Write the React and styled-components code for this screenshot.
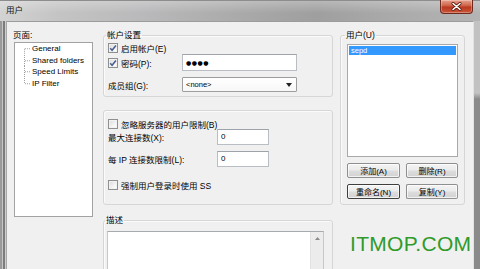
import React from "react";
import styled, { createGlobalStyle } from "styled-components";

const FONT = `"Liberation Sans", "Noto Sans CJK SC", sans-serif`;

const Global = createGlobalStyle`
  html, body { margin: 0; padding: 0; background: #f0f0f0; }
  body { font-family: ${FONT}; }
  * { box-sizing: border-box; }
`;

const Window = styled.div`
  position: relative;
  width: 480px;
  height: 269px;
  overflow: hidden;
  display: flex;
  flex-direction: column;
  font-family: ${FONT};
  font-size: 8.5px;
  color: #000;
  background: #f0f0f0;
`;

const TitleBar = styled.div`
  height: 21px;
  flex: none;
  display: flex;
  justify-content: space-between;
  align-items: flex-start;
  background:
    linear-gradient(to bottom, rgba(255,255,255,0.25), rgba(255,255,255,0) 60%),
    linear-gradient(to right, #d3d3d3 0%, #c4c4c4 12%, #b9b9bb 30%, #a6a6a6 55%, #9f9f9f 66%, #a9a9a9 80%, #b4b4b4 100%);
  border-top: 1px solid #8d8d8d;
`;

const Title = styled.div`
  padding: 3px 0 0 6px;
  line-height: 13px;
  font-size: 8.5px;
  color: #111;
`;

const CloseButton = styled.div`
  width: 33px;
  height: 14px;
  margin: -1px 7px 0 0;
  display: flex;
  align-items: center;
  justify-content: center;
  border: 1px solid #6e2a1f;
  border-top: none;
  border-radius: 0 0 4px 4px;
  background: linear-gradient(#e6a08c, #d06a50 40%, #b9391f 55%, #c9553a 100%);
  box-shadow: inset 0 0 0 1px rgba(255,255,255,0.3);
`;

const Body = styled.div`
  flex: 1;
  display: flex;
  min-height: 0;
`;

const SideFrame = styled.div`
  width: 6px;
  flex: none;
  background: ${(p) =>
    p.$side === "left"
      ? "linear-gradient(to right, #9a9a9a 0 2px, #c6c6c6 2px 3px, #7c7c7c 3px 5px, #cfcfcf 5px 6px)"
      : "linear-gradient(to bottom, #c2c2c2 0 72px, #8a8a8a 78px 100%)"};
`;

const Client = styled.div`
  flex: 1;
  display: flex;
  align-items: flex-start;
  padding: 7px 0 0 6px;
  background: #f0f0f0;
  border-top: 1px solid #9c9c9c;
  border-left: 1px solid #a7a7a7;
  border-right: 1px solid #e2e2e2;
`;

const LeftCol = styled.div`
  width: 80px;
  flex: none;
  display: flex;
  flex-direction: column;
`;

const PageLabel = styled.div`
  line-height: 12px;
  height: 12px;
`;

const Tree = styled.div`
  margin: 1px 0 0 1px;
  width: 79px;
  height: 175px;
  border: 1px solid #a2a2a2;
  background: #fff;
`;

const TreeRow = styled.div`
  display: flex;
  align-items: center;
  height: 11.5px;
  font-size: 8px;
  white-space: nowrap;
`;

const MidCol = styled.div`
  width: 230px;
  margin-left: 10px;
  flex: none;
  display: flex;
  flex-direction: column;
`;

const RightCol = styled.div`
  width: 125px;
  margin-left: 7px;
  flex: none;
`;

const Group = styled.fieldset`
  margin: ${(p) => p.$mt || 0}px 0 0 0;
  padding: ${(p) => p.$pad};
  border: 1px solid #d6d6d6;
  border-radius: 3px;
  box-shadow: inset 1px 1px 0 #fbfbfb;
  min-width: 0;
`;

const Legend = styled.legend`
  padding: 0 1px;
  margin-left: -2px;
  line-height: 12px;
  font-size: 8.5px;
`;

const Row = styled.div`
  display: flex;
  align-items: center;
  height: ${(p) => p.$h}px;
  margin-top: ${(p) => p.$mt || 0}px;
`;

const FieldLabel = styled.span`
  width: ${(p) => p.$w}px;
  flex: none;
  white-space: nowrap;
`;

const CheckLabel = styled.span`
  display: flex;
  align-items: center;
  gap: 3px;
  white-space: nowrap;
  width: ${(p) => (p.$w ? `${p.$w}px` : "auto")};
  flex: none;
`;

const Box = styled.span`
  width: 10px;
  height: 10px;
  flex: none;
  display: flex;
  align-items: center;
  justify-content: center;
  border: 1px solid #8e8f8f;
  background: linear-gradient(135deg, #d8d8d8, #f4f4f4 60%, #ffffff);
  box-shadow: inset 0 0 0 1px #f2f2f2;
`;

const TextInput = styled.div`
  width: ${(p) => p.$w}px;
  height: ${(p) => p.$h}px;
  flex: none;
  display: flex;
  align-items: ${(p) => (p.$top ? "flex-start" : "center")};
  padding: ${(p) => (p.$top ? "2px 0 0 3px" : "0 0 0 3px")};
  background: #fff;
  border: 1px solid #b9bec4;
  border-top-color: #9ea3a9;
  font-size: 8px;
  line-height: 10px;
`;

const Dots = styled.span`
  font-size: 6px;
  letter-spacing: 0.5px;
  font-family: "DejaVu Sans", sans-serif;
`;

const Select = styled.div`
  width: 115px;
  height: 15px;
  flex: none;
  display: flex;
  align-items: center;
  justify-content: space-between;
  padding: 0 4px 0 3px;
  background: linear-gradient(#ffffff, #f7f7f7);
  border: 1px solid #9d9d9d;
  border-radius: 1px;
  font-size: 7.5px;
`;

const DescArea = styled.div`
  height: 60px;
  display: flex;
  background: #fff;
  border: 1px solid #c4c8cc;
  border-top-color: #a7abb0;
`;

const DescText = styled.div`
  flex: 1;
`;

const ScrollTrack = styled.div`
  width: 13px;
  flex: none;
  background: #ececec;
  border-left: 1px solid #e2e2e2;
  display: flex;
  justify-content: center;
  padding-top: 5px;
`;

const ListBox = styled.div`
  width: 111px;
  height: 113px;
  background: #fff;
  border: 1px solid #a9a9a9;
  padding: 1px;
`;

const ListItem = styled.div`
  height: 9px;
  line-height: 9px;
  padding-left: 2px;
  font-size: 7.5px;
  color: ${(p) => (p.$selected ? "#fff" : "#000")};
  background: ${(p) => (p.$selected ? "#3399ff" : "transparent")};
`;

const ButtonGrid = styled.div`
  display: grid;
  grid-template-columns: 53px 52px;
  grid-auto-rows: 15px;
  column-gap: 6px;
  row-gap: 6px;
  margin-top: 6px;
`;

const Button = styled.div`
  display: flex;
  align-items: center;
  justify-content: center;
  font-size: 8px;
  white-space: nowrap;
  border: 1px solid ${(p) => (p.$variant === "default" ? "#3f3f3f" : "#8f8f8f")};
  border-right-color: ${(p) =>
    p.$variant === "hot" ? "#5f9fd4" : p.$variant === "default" ? "#3f3f3f" : "#8f8f8f"};
  border-radius: 2px;
  background: linear-gradient(#f4f4f4, #ebebeb 48%, #dddddd 52%, #d2d2d2);
  box-shadow: inset 0 0 0 1px rgba(255, 255, 255, 0.7);
`;

const Watermark = styled.div`
  position: absolute;
  left: 350px;
  top: 233px;
  font-family: "Liberation Sans", Arial, sans-serif;
  font-size: 21px;
  line-height: 21px;
  letter-spacing: 0.3px;
  color: #2f9b2a;
  white-space: nowrap;
`;

function Check({ checked }) {
  return (
    <Box>
      {checked && (
        <svg width="8" height="8" viewBox="0 0 8 8">
          <path d="M1.2 4.2 L3.1 6.2 L6.9 1.4" fill="none" stroke="#4a5e93" strokeWidth="1.6" />
        </svg>
      )}
    </Box>
  );
}

function Connector({ pos }) {
  const y1 = pos === "first" ? 5.75 : 0;
  const y2 = pos === "last" ? 5.75 : 11.5;
  return (
    <svg width="17" height="11.5" viewBox="0 0 17 11.5" style={{ flex: "none" }}>
      <line x1="9.5" y1={y1} x2="9.5" y2={y2} stroke="#a0a0a0" strokeWidth="1" strokeDasharray="1 1" />
      <line x1="10" y1="5.75" x2="16" y2="5.75" stroke="#a0a0a0" strokeWidth="1" strokeDasharray="1 1" />
    </svg>
  );
}

const pages = ["General", "Shared folders", "Speed Limits", "IP Filter"];

export default function App() {
  return (
    <>
      <Global />
      <Window>
        <TitleBar>
          <Title>用户</Title>
          <CloseButton>
            <svg width="11" height="9" viewBox="0 0 11 9">
              <path d="M2 1.5 L9 7.5 M9 1.5 L2 7.5" stroke="#5a1a10" strokeWidth="3" strokeLinecap="round" />
              <path d="M2 1.5 L9 7.5 M9 1.5 L2 7.5" stroke="#ffffff" strokeWidth="1.6" strokeLinecap="round" />
            </svg>
          </CloseButton>
        </TitleBar>
        <Body>
          <SideFrame $side="left" />
          <Client>
            <LeftCol>
              <PageLabel>页面:</PageLabel>
              <Tree>
                {pages.map((p, i) => (
                  <TreeRow key={p}>
                    <Connector pos={i === 0 ? "first" : i === pages.length - 1 ? "last" : "mid"} />
                    {p}
                  </TreeRow>
                ))}
              </Tree>
            </LeftCol>

            <MidCol>
              <Group $pad="1px 4px 4px 4px">
                <Legend>帐户设置</Legend>
                <Row $h={12}>
                  <CheckLabel>
                    <Check checked />
                    启用帐户(E)
                  </CheckLabel>
                </Row>
                <Row $h={17}>
                  <CheckLabel $w={74}>
                    <Check checked />
                    密码(P):
                  </CheckLabel>
                  <TextInput $w={115} $h={17}>
                    <Dots>●●●●</Dots>
                  </TextInput>
                </Row>
                <Row $h={15} $mt={6}>
                  <FieldLabel $w={74}>成员组(G):</FieldLabel>
                  <Select>
                    <span>&lt;none&gt;</span>
                    <svg width="6" height="4" viewBox="0 0 6 4">
                      <path d="M0 0 L6 0 L3 4 Z" fill="#222" />
                    </svg>
                  </Select>
                </Row>
              </Group>

              <Group $mt={13} $pad="8px 4px 13px 4px">
                <Row $h={10}>
                  <CheckLabel>
                    <Check />
                    忽略服务器的用户限制(B)
                  </CheckLabel>
                </Row>
                <Row $h={16}>
                  <FieldLabel $w={109}>最大连接数(X):</FieldLabel>
                  <TextInput $w={52} $h={16} $top>0</TextInput>
                </Row>
                <Row $h={16} $mt={6}>
                  <FieldLabel $w={109}>每 IP 连接数限制(L):</FieldLabel>
                  <TextInput $w={52} $h={16} $top>0</TextInput>
                </Row>
                <Row $h={12} $mt={12}>
                  <CheckLabel>
                    <Check />
                    强制用户登录时使用 SS
                  </CheckLabel>
                </Row>
              </Group>

              <Group $mt={9} $pad="5px 8px 0 3px">
                <Legend>描述</Legend>
                <DescArea>
                  <DescText />
                  <ScrollTrack>
                    <svg width="5" height="3" viewBox="0 0 5 3">
                      <path d="M0 3 L5 3 L2.5 0 Z" fill="#8a8a8a" />
                    </svg>
                  </ScrollTrack>
                </DescArea>
              </Group>
            </MidCol>

            <RightCol>
              <Group $pad="3px 6px 5px 6px">
                <Legend>用户(U)</Legend>
                <ListBox>
                  <ListItem $selected>sepd</ListItem>
                </ListBox>
                <ButtonGrid>
                  <Button>添加(A)</Button>
                  <Button>删除(R)</Button>
                  <Button $variant="default">重命名(N)</Button>
                  <Button $variant="hot">复制(Y)</Button>
                </ButtonGrid>
              </Group>
            </RightCol>
          </Client>
          <SideFrame $side="right" />
        </Body>
        <Watermark>ITMOP.COM</Watermark>
      </Window>
    </>
  );
}
